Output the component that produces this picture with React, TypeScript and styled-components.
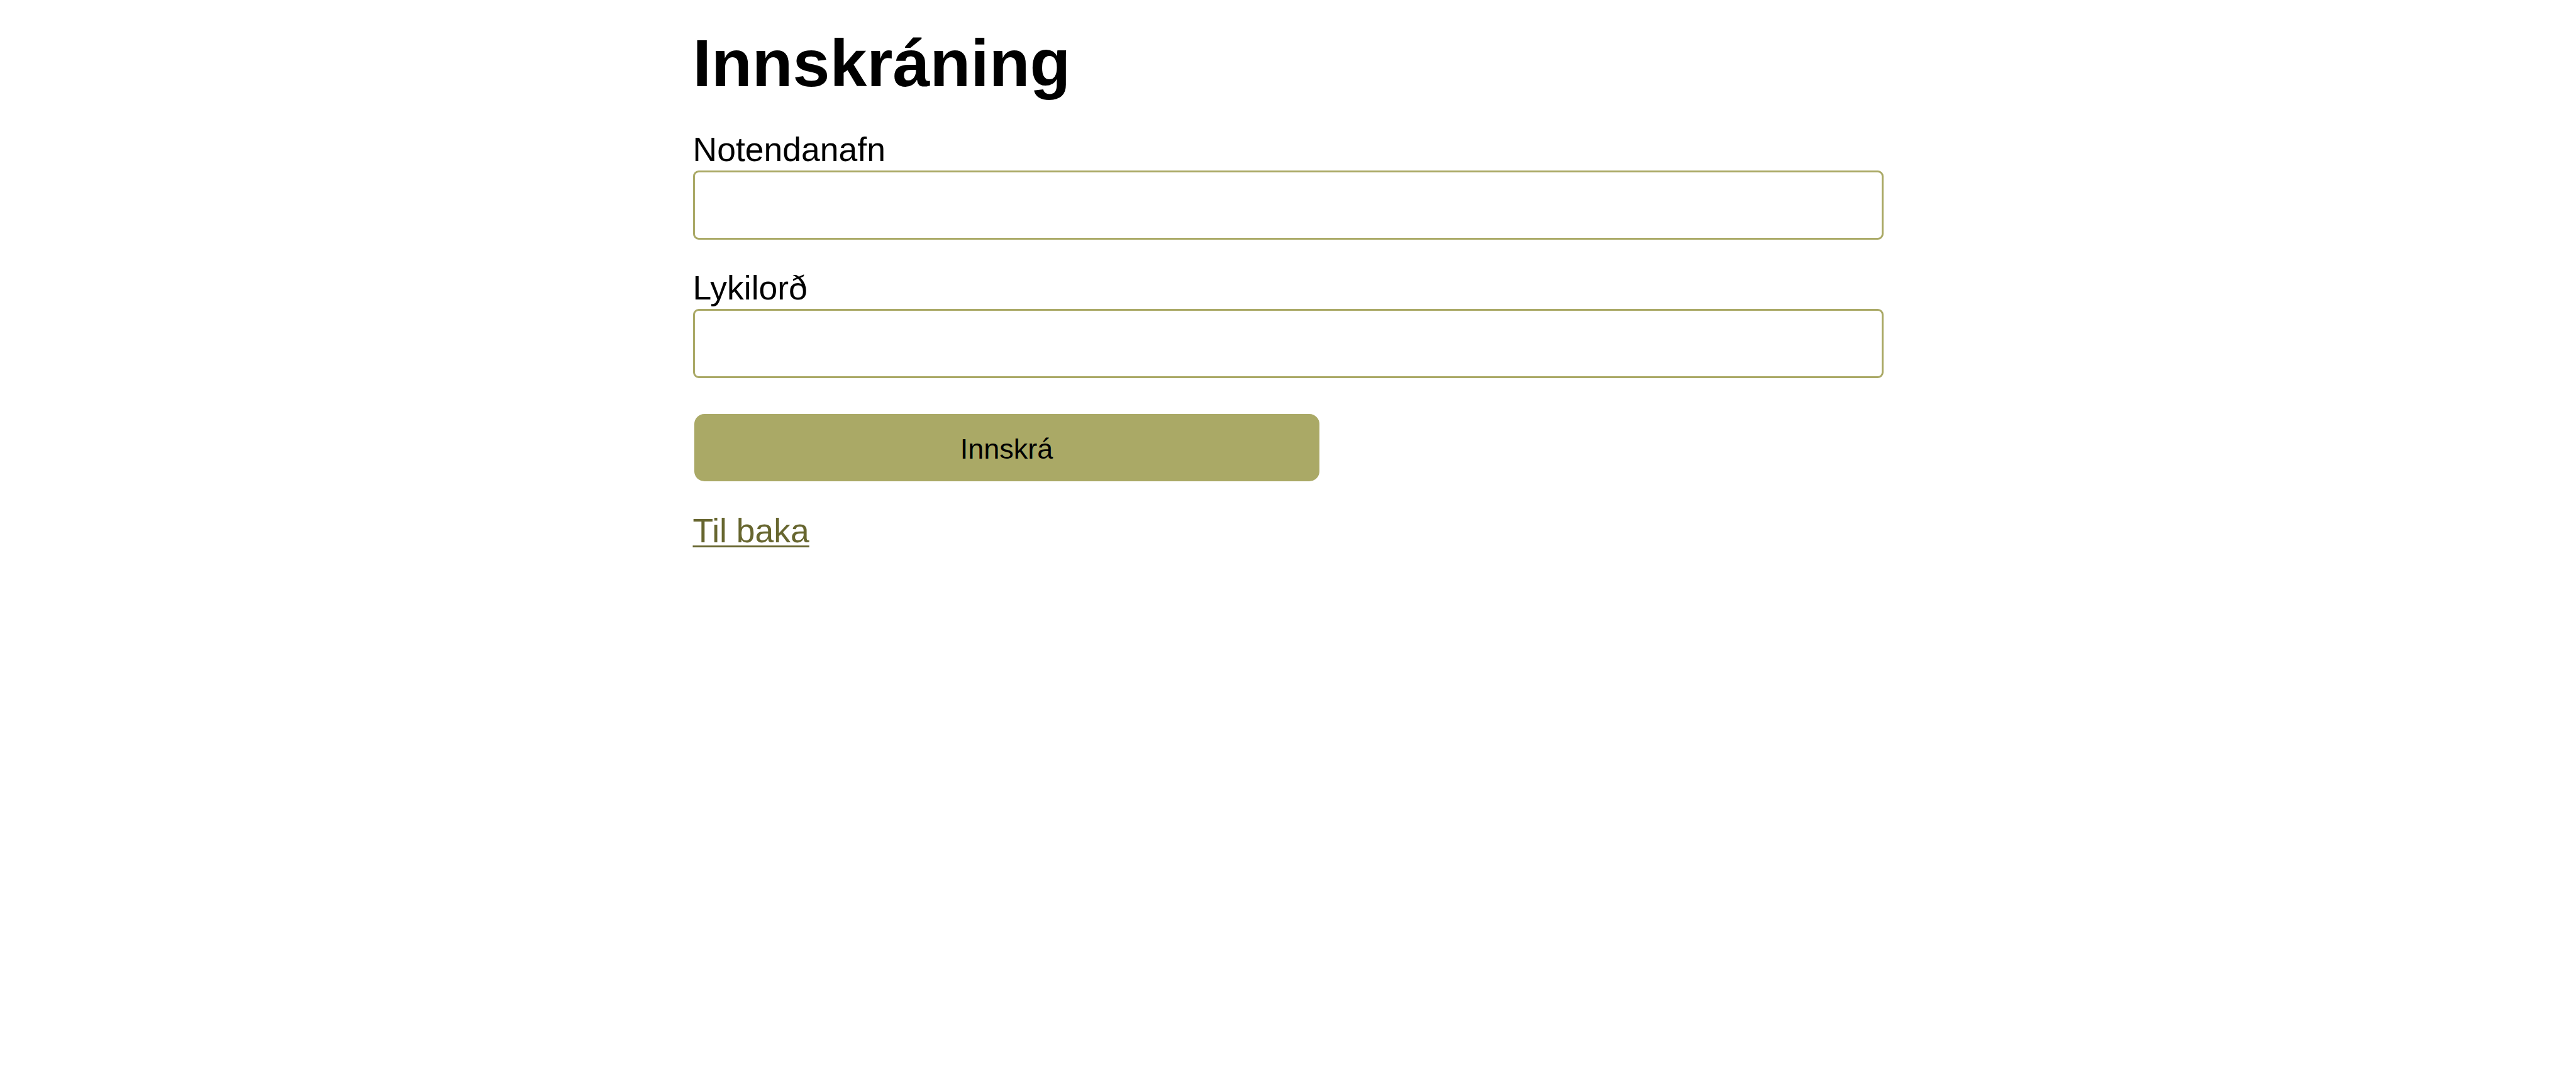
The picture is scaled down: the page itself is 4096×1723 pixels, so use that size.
import React, { useState } from 'react'
import styled, { createGlobalStyle } from 'styled-components'

const GlobalStyle = createGlobalStyle`
body {
  margin: 0;
  background: #ffffff;
  font-family: "Liberation Sans", Arial, Helvetica, sans-serif;
  color: #000000;
}
`

const Page = styled.main`
width: 1893px;
margin: 0 auto;
`

const Title = styled.h1`
margin: 38px 0 45px;
font-size: 106px;
line-height: 124px;
font-weight: 700;
`

const Form = styled.form`
display: flex;
flex-direction: column;
align-items: flex-start;
`

type FieldProps = {
  last?: boolean
}

const Field = styled.div<FieldProps>`
display: flex;
flex-direction: column;
gap: 2px;
width: 100%;
margin-bottom: ${(props: FieldProps) => (props.last ? '57px' : '46px')};
`

const Label = styled.label`
font-size: 53.5px;
line-height: 62px;
`

const Input = styled.input`
box-sizing: border-box;
width: 100%;
height: 110px;
padding: 0 24px;
border: 3px solid #aaa966;
border-radius: 9px;
background: #ffffff;
font-family: inherit;
font-size: 48px;
outline: none;
`

const Submit = styled.button`
width: 994px;
height: 107px;
margin: 0 0 48px 2px;
padding: 4px 0 0;
border: none;
border-radius: 16px;
background: #aaa966;
color: #000000;
font-family: "Liberation Sans", Arial, sans-serif;
font-size: 45px;
cursor: pointer;
`

const BackLink = styled.a`
font-size: 53.5px;
line-height: 62px;
color: #67662f;
text-decoration: underline;
text-decoration-thickness: 3px;
text-underline-offset: 5px;
`

export default function App() {
  const [user, setUser] = useState('')
  const [pass, setPass] = useState('')
  return (
    <>
      <GlobalStyle />
      <Page>
        <Title>Innskráning</Title>
        <Form onSubmit={(e) => e.preventDefault()}>
          <Field>
            <Label htmlFor="username">Notendanafn</Label>
            <Input id="username" type="text" value={user} onChange={(e) => setUser(e.target.value)} />
          </Field>
          <Field last>
            <Label htmlFor="password">Lykilorð</Label>
            <Input id="password" type="password" value={pass} onChange={(e) => setPass(e.target.value)} />
          </Field>
          <Submit type="submit">Innskrá</Submit>
        </Form>
        <BackLink href="#">Til baka</BackLink>
      </Page>
    </>
  )
}
